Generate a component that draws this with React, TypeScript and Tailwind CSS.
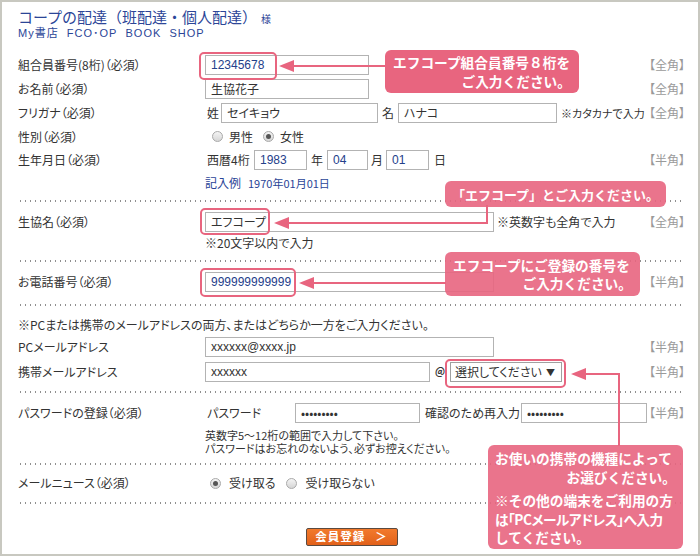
import type { ReactNode } from "react";

const PINK = "#e8657f";

function Dots({ className }: { className: string }) {
  return (
    <div
      className={`h-[2px] bg-[radial-gradient(circle,#8f8f8f_0.7px,transparent_1.1px)] bg-[length:5px_2px] ${className}`}
    />
  );
}

function Row({
  label,
  children,
  tag,
  className,
}: {
  label?: string;
  children?: ReactNode;
  tag?: string;
  className: string;
}) {
  return (
    <div className={`flex items-center ${className}`}>
      <div className="w-[187px] shrink-0">{label}</div>
      <div className="flex flex-1 items-center whitespace-nowrap">{children}</div>
      {tag && <span className="text-[#9a9a9a]">{tag}</span>}
    </div>
  );
}

function Field({
  className,
  value,
  blue,
}: {
  className: string;
  value?: string;
  blue?: boolean;
}) {
  return (
    <div
      className={`flex h-[20px] shrink-0 items-center border border-[#b3b3b3] bg-white px-[5px] ${className} ${
        blue ? "font-['Liberation_Sans',sans-serif] text-[#24408a]" : ""
      }`}
    >
      {value}
    </div>
  );
}

function Radio({ checked }: { checked?: boolean }) {
  return (
    <span className="flex h-[11px] w-[11px] shrink-0 items-center justify-center rounded-full border border-[#a9a9a9] bg-[linear-gradient(#f4f4f4,#d6d6d6)]">
      {checked && <span className="h-[5px] w-[5px] rounded-full bg-[#555]" />}
    </span>
  );
}

function Mask({ className }: { className: string }) {
  return <Field className={className} value="•••••••••" />;
}

export default function App() {
  return (
    <div className="relative h-[557px] w-[700px] bg-white font-['Noto_Sans_CJK_JP',sans-serif] text-[12px] leading-none text-[#333]">
      {/* form frame */}
      <div className="h-[556px] w-[700px] border-2 border-[#c8c8c0] pr-[13px] pl-[16px] pt-[6px] [font-feature-settings:'palt']">
        <div className="flex items-end text-[#2b4597] [font-feature-settings:normal]">
          <span className="text-[15px] leading-[18px]">コープの配達（班配達・個人配達）</span>
          <span className="mb-[2px] ml-[4px] text-[10px] leading-none">様</span>
        </div>
        <div className="font-['Liberation_Sans','Noto_Sans_CJK_JP',sans-serif] text-[11px] leading-[14px] tracking-[1px] text-[#2b4597]">
          My書店&nbsp;&nbsp;FCO･OP&nbsp;&nbsp;BOOK&nbsp;&nbsp;SHOP
        </div>

        <Row label="組合員番号(8桁)（必須）" tag="【全角】" className="mt-[13px] h-[24px]">
          <Field className="w-[164px]" value="12345678" blue />
        </Row>
        <Row label="お名前（必須）" tag="【全角】" className="h-[24px]">
          <Field className="w-[164px]" value="生協花子" />
        </Row>
        <Row label="フリガナ（必須）" tag="【全角】" className="h-[24px]">
          <span className="w-[16px] pl-[2px]">姓</span>
          <Field className="w-[157px]" value="セイキョウ" />
          <span className="w-[20px] text-center">名</span>
          <Field className="w-[159px]" value="ハナコ" />
          <span className="ml-[4px] text-[11px]">※カタカナで入力</span>
        </Row>
        <Row label="性別（必須）" className="h-[23px]">
          <span className="ml-[7px]" />
          <Radio />
          <span className="ml-[6px]">男性</span>
          <span className="ml-[10px]" />
          <Radio checked />
          <span className="ml-[6px]">女性</span>
        </Row>
        <Row label="生年月日（必須）" tag="【半角】" className="h-[24px]">
          <span className="w-[49px] pl-[2px]">西暦4桁</span>
          <Field className="w-[53px]" value="1983" blue />
          <span className="w-[20px] text-center">年</span>
          <Field className="w-[41px]" value="04" blue />
          <span className="w-[18px] text-center">月</span>
          <Field className="w-[43px]" value="01" blue />
          <span className="ml-[5px]">日</span>
        </Row>
        <Row className="h-[22px]">
          <span className="text-[#2b4597]">記入例</span>
          <span className="ml-[7px] text-[11px] text-[#2b4597]">1970年01月01日</span>
        </Row>

        <Dots className="mt-[6px]" />

        <Row label="生協名（必須）" tag="【全角】" className="mt-[8px] h-[24px]">
          <Field className="w-[289px]" value="エフコープ" />
          <span className="ml-[3px]">※英数字も全角で入力</span>
        </Row>
        <Row className="h-[18px]">
          <span>※20文字以内で入力</span>
        </Row>

        <Dots className="mt-[8px]" />

        <Row label="お電話番号（必須）" tag="【半角】" className="mt-[8px] h-[24px]">
          <Field className="w-[289px]" value="999999999999" blue />
        </Row>

        <Dots className="mt-[10px]" />

        <div className="mt-[8px] flex h-[22px] items-center">
          ※PCまたは携帯のメールアドレスの両方、またはどちらか一方をご入力ください。
        </div>
        <Row label="PCメールアドレス" tag="【半角】" className="h-[22px]">
          <Field className="w-[289px] font-['Liberation_Sans',sans-serif]" value="xxxxxx@xxxx.jp" />
        </Row>
        <Row label="携帯メールアドレス" tag="【半角】" className="mt-[2px] h-[24px]">
          <Field className="w-[225px] font-['Liberation_Sans',sans-serif]" value="xxxxxx" />
          <span className="w-[20px] text-center text-[10px] font-bold">＠</span>
          <div className="flex h-[20px] w-[112px] items-center justify-between border border-[#a0a0a0] bg-white pr-[6px] pl-[4px]">
            <span>選択してください</span>
            <span className="text-[9px]">▼</span>
          </div>
        </Row>

        <Dots className="mt-[7px]" />

        <Row label="パスワードの登録（必須）" tag="【半角】" className="mt-[8px] h-[24px]">
          <span className="w-[90px] pl-[2px]">パスワード</span>
          <Mask className="w-[125px]" />
          <span className="ml-[5px] w-[96px]">確認のため再入力</span>
          <Mask className="w-[126px]" />
        </Row>
        <div className="mt-[4px] pl-[187px] text-[11px] leading-[13px]">
          <div>英数字5～12桁の範囲で入力して下さい。</div>
          <div>パスワードはお忘れのないよう、必ずお控えください。</div>
        </div>

        <Dots className="mt-[8px]" />

        <Row label="メールニュース（必須）" className="mt-[7px] h-[22px]">
          <span className="ml-[5px]" />
          <Radio checked />
          <span className="ml-[8px]">受け取る</span>
          <span className="ml-[11px]" />
          <Radio />
          <span className="ml-[8px]">受け取らない</span>
        </Row>

        <Dots className="mt-[8px]" />

        <div className="mt-[24px] flex justify-center">
          <button className="flex h-[18px] w-[92px] items-center justify-center gap-[10px] rounded-[2px] border border-[#5b4a40] bg-[linear-gradient(#f27a2c,#e2611a)] text-[11.5px] font-bold tracking-[1px] text-white">
            <span>会員登録</span>
            <span>＞</span>
          </button>
        </div>
      </div>

      {/* highlights */}
      <div className="absolute top-[52px] left-[199px] h-[28px] w-[78px] rounded-[5px] border-2 border-[#e8657f]" />
      <div className="absolute top-[208px] left-[200px] h-[27px] w-[70px] rounded-[5px] border-2 border-[#e8657f]" />
      <div className="absolute top-[268px] left-[200px] h-[29px] w-[96px] rounded-[5px] border-2 border-[#e8657f]" />
      <div className="absolute top-[359px] left-[445px] h-[29px] w-[121px] rounded-[5px] border-2 border-[#e8657f]" />

      {/* arrows */}
      <svg className="pointer-events-none absolute top-0 left-0" width="700" height="557">
        <g stroke={PINK} strokeWidth="2" fill="none">
          <line x1="290" y1="66" x2="387" y2="66" />
          <polyline points="284,223 487,223 487,205" />
          <line x1="308" y1="283" x2="446" y2="283" />
          <polyline points="582,374 619,374 619,446" />
        </g>
        <g fill={PINK}>
          <polygon points="279,66 294,60 294,72" />
          <polygon points="274,223 289,217 289,229" />
          <polygon points="299,283 314,277 314,289" />
          <polygon points="571,374 586,368 586,380" />
        </g>
      </svg>

      {/* callouts */}
      <div className="absolute top-[50px] left-[385px] flex h-[43px] w-[194px] flex-col justify-center rounded-[6px] bg-[#e8657f] px-[8px] text-[13.7px] leading-[19px] font-bold text-white">
        <div>エフコープ組合員番号８桁を</div>
        <div className="text-right">ご入力ください。</div>
      </div>
      <div className="absolute top-[181px] left-[445px] flex h-[26px] w-[221px] items-center justify-center rounded-[6px] bg-[#e8657f]/90 text-[13px] font-bold text-white">
        「エフコープ」とご入力ください。
      </div>
      <div className="absolute top-[252px] left-[445px] flex h-[44px] w-[195px] flex-col justify-center rounded-[6px] bg-[#e8657f]/90 px-[8px] text-[13.7px] leading-[18px] font-bold text-white">
        <div>エフコープにご登録の番号を</div>
        <div className="text-right">ご入力ください。</div>
      </div>
      <div className="absolute top-[445px] left-[488px] h-[104px] w-[195px] rounded-[6px] bg-[#e8657f]/90 px-[7px] pt-[4px] text-[13.7px] leading-[18.5px] font-bold whitespace-nowrap text-white">
        <div>お使いの携帯の機種によって</div>
        <div className="text-right">お選びください。</div>
        <div className="mt-[5px]">※その他の端末をご利用の方</div>
        <div className="tracking-[-0.5px] [font-feature-settings:'palt']">は「PCメールアドレス」へ入力</div>
        <div>してください。</div>
      </div>
    </div>
  );
}
